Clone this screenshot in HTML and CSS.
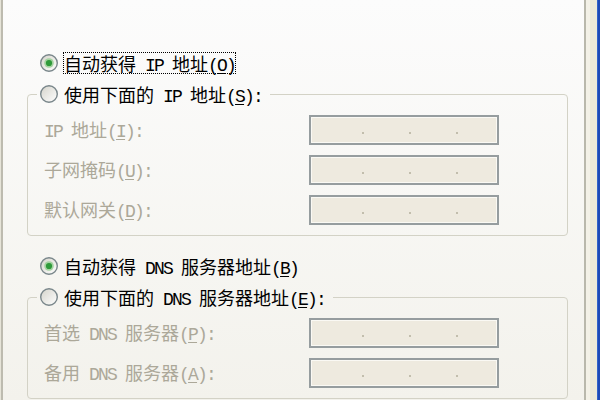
FILE: index.html
```html
<!DOCTYPE html>
<html lang="zh-CN">
<head>
  <meta charset="UTF-8">
  <title>Internet 协议 (TCP/IP) 属性</title>
  <link rel="stylesheet" href="styles.css">
</head>
<body>
  <!-- shared gradients for the radio buttons -->
  <svg class="defs" width="0" height="0">
    <defs>
      <linearGradient id="radioFill" x1="0" y1="0" x2="1" y2="1">
        <stop offset="0" stop-color="#d4d3ca"/>
        <stop offset="1" stop-color="#ffffff"/>
      </linearGradient>
    </defs>
  </svg>

  <div class="window">
    <div class="edge-left"></div>

    <div class="page">
      <p class="intro">您需要从网络系统管理员处获得适当的<span class="en"> IP </span>设置。</p>

      <div class="option first">
        <svg class="radio" viewBox="0 0 20 20" width="20" height="20">
          <circle cx="10" cy="10" r="8.3" fill="url(#radioFill)" stroke="#7a878b" stroke-width="1.4"/>
          <circle cx="10" cy="10" r="4.8" fill="#a4d3a0"/>
          <circle cx="10" cy="10" r="3.1" fill="#2f9a3a"/>
        </svg>
        <span class="caption focus">自动获得<span class="en"> IP </span>地址<span class="en">(<u>O</u>)</span></span>
      </div>

      <fieldset class="group">
        <legend class="option">
          <svg class="radio" viewBox="0 0 20 20" width="20" height="20">
            <circle cx="10" cy="10" r="8.3" fill="url(#radioFill)" stroke="#7a878b" stroke-width="1.4"/>
          </svg>
          <span class="caption">使用下面的<span class="en"> IP </span>地址<span class="en">(<u>S</u>):</span></span>
        </legend>
        <div class="fields">
          <span class="field-label"><span class="en">IP </span>地址<span class="en">(<u>I</u>):</span></span>
          <div class="ip-box"><i></i><i></i><i></i></div>

          <span class="field-label">子网掩码<span class="en">(<u>U</u>):</span></span>
          <div class="ip-box"><i></i><i></i><i></i></div>

          <span class="field-label">默认网关<span class="en">(<u>D</u>):</span></span>
          <div class="ip-box"><i></i><i></i><i></i></div>
        </div>
      </fieldset>

      <div class="option dns">
        <svg class="radio" viewBox="0 0 20 20" width="20" height="20">
          <circle cx="10" cy="10" r="8.3" fill="url(#radioFill)" stroke="#7a878b" stroke-width="1.4"/>
          <circle cx="10" cy="10" r="4.8" fill="#a4d3a0"/>
          <circle cx="10" cy="10" r="3.1" fill="#2f9a3a"/>
        </svg>
        <span class="caption">自动获得<span class="en"> DNS </span>服务器地址<span class="en">(<u>B</u>)</span></span>
      </div>

      <fieldset class="group">
        <legend class="option">
          <svg class="radio" viewBox="0 0 20 20" width="20" height="20">
            <circle cx="10" cy="10" r="8.3" fill="url(#radioFill)" stroke="#7a878b" stroke-width="1.4"/>
          </svg>
          <span class="caption">使用下面的<span class="en"> DNS </span>服务器地址<span class="en">(<u>E</u>):</span></span>
        </legend>
        <div class="fields">
          <span class="field-label">首选<span class="en"> DNS </span>服务器<span class="en">(<u>P</u>):</span></span>
          <div class="ip-box"><i></i><i></i><i></i></div>

          <span class="field-label">备用<span class="en"> DNS </span>服务器<span class="en">(<u>A</u>):</span></span>
          <div class="ip-box"><i></i><i></i><i></i></div>
        </div>
      </fieldset>
    </div>

    <div class="edge-right"></div>
  </div>
</body>
</html>
```

FILE: styles.css
```css
body {
  margin: 0;
  padding: 0;
  font-family: "Noto Sans CJK SC", "Liberation Sans", sans-serif;
  font-size: 18px;
  color: #000000;
  background: #ece9d8;
}

.defs {
  display: block;
}

.window {
  display: flex;
  width: 600px;
  height: 400px;
  overflow: hidden;
}

/* dialog frame on both sides of the tab page */
.edge-left {
  width: 3px;
  background: linear-gradient(to right, #e6e4d8 0 1px, #bdbbaf 1px 3px);
}

.edge-right {
  width: 16px;
  background: linear-gradient(to right,
    #b9b8ac 0 2px,
    #f3f1e7 2px 6px,
    #ece9d8 6px 13px,
    #3162c9 13px 14px,
    #1d49b5 14px 16px);
}

.page {
  flex: 1;
  background: linear-gradient(#fcfcfc, #f3f2ec);
  overflow: hidden;
}

/* half-width latin in the old bitmap style */
.en {
  font-family: "Liberation Mono", monospace;
  letter-spacing: -1.8px;
}

u {
  text-underline-offset: 2px;
}

/* last line of the description, scrolled mostly out of view */
.intro {
  margin: -21px 0 0 25px;
  height: 22px;
  line-height: 22px;
  color: #9a9a94;
  white-space: nowrap;
}

.option {
  display: flex;
  align-items: center;
  height: 22px;
}

.option.first {
  margin: 51px 0 0 36px;
}

.option.dns {
  margin: 19px 0 0 36px;
}

.radio {
  flex: none;
  margin-right: 4px;
}

.caption {
  display: inline-block;
  height: 22px;
  line-height: 22px;
  padding: 0 1px;
  white-space: nowrap;
}

.focus {
  outline: 1px dotted #000000;
  outline-offset: -1px;
}

.group {
  box-sizing: border-box;
  width: 541px;
  margin: 9px 0 0 24px;
  padding: 0;
  border: 1px solid #d3d2c6;
  border-radius: 4px;
  min-inline-size: 0;
}

.group legend {
  margin-left: 9px;
  padding: 0 7px 0 2px;
}

.fields {
  display: grid;
  grid-template-columns: 265px 190px;
  grid-auto-rows: 30px;
  row-gap: 10px;
  align-items: center;
  padding: 10px 0 10px 16px;
}

.field-label {
  color: #aca899;
  white-space: nowrap;
  line-height: 22px;
}

/* disabled IP address control */
.ip-box {
  box-sizing: border-box;
  height: 30px;
  display: flex;
  align-items: center;
  gap: 45px;
  padding: 5px 0 0 51px;
  background: #eeeadf;
  border: 2px solid #969d9f;
  box-shadow: inset 0 0 0 1px #faf9f4;
}

.ip-box i {
  width: 2px;
  height: 2px;
  background: #c2bead;
}
```
